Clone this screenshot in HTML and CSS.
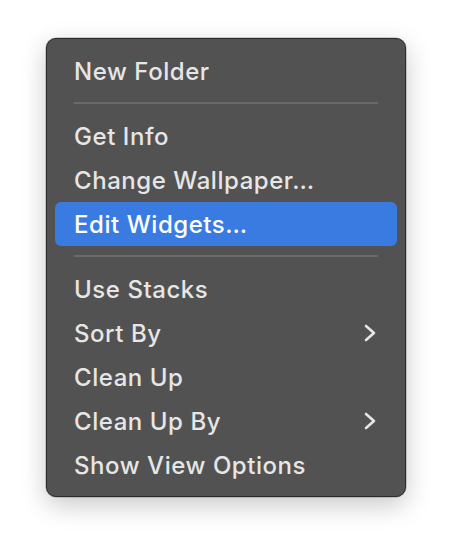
FILE: index.html
```html
<!DOCTYPE html>
<html lang="en">
  <head>
    <meta charset="UTF-8" />
    <meta name="viewport" content="width=device-width, initial-scale=1.0" />
    <title>Desktop Menu</title>
    <link rel="stylesheet" href="styles.css">
  </head>
  <body>
    <div class="menu">
      <div class="menu-item">New Folder</div>
      <div class="separator"></div>

      <div class="menu-item">Get Info</div>
      <div class="menu-item">Change Wallpaper…</div>
      <div class="menu-item active">Edit Widgets…</div>
      <div class="separator"></div>

      <div class="menu-item">Use Stacks</div>
      <div class="menu-item">
        <span>Sort By</span>
        <svg class="chevron" viewBox="0 0 12 18" width="12" height="18">
          <path d="M2 2 L10 9 L2 16" />
        </svg>
      </div>
      <div class="menu-item">Clean Up</div>
      <div class="menu-item">
        <span>Clean Up By</span>
        <svg class="chevron" viewBox="0 0 12 18" width="12" height="18">
          <path d="M2 2 L10 9 L2 16" />
        </svg>
      </div>
      <div class="menu-item">Show View Options</div>
    </div>
  </body>
</html>
```

FILE: styles.css
```css
/* page */
body {
  margin: 0;
  padding: 38px 0 60px 46px;
  min-height: 552px;
  box-sizing: border-box;
  background: #fff;
  font-family: 'Inter', 'Noto Sans', sans-serif;
}

/* menu box */
.menu {
  width: 342px;
  padding: 10px 8px 9px 8px;
  background: #525252;
  border: 1px solid #2b2b2b;
  border-radius: 10px;
  box-shadow: 0 8px 26px rgba(0, 0, 0, 0.22), 0 0 0 0.5px rgba(0, 0, 0, 0.3);
}

.menu-item {
  display: flex;
  justify-content: space-between;
  align-items: center;
  height: 44px;
  padding: 0 21px 0 19px;
  border-radius: 6px;
  color: #e6e6e6;
  font-size: 24px;
  font-weight: 500;
  letter-spacing: 0.55px;
}

.menu-item.active {
  background: #3a7be2;
  color: #fff;
}

.chevron path {
  fill: none;
  stroke: #e6e6e6;
  stroke-width: 2.6;
  stroke-linecap: round;
  stroke-linejoin: round;
}

/* divider */
.separator {
  height: 2px;
  margin: 9px 19px 10px 19px;
  background: #6a6a6a;
}
```
